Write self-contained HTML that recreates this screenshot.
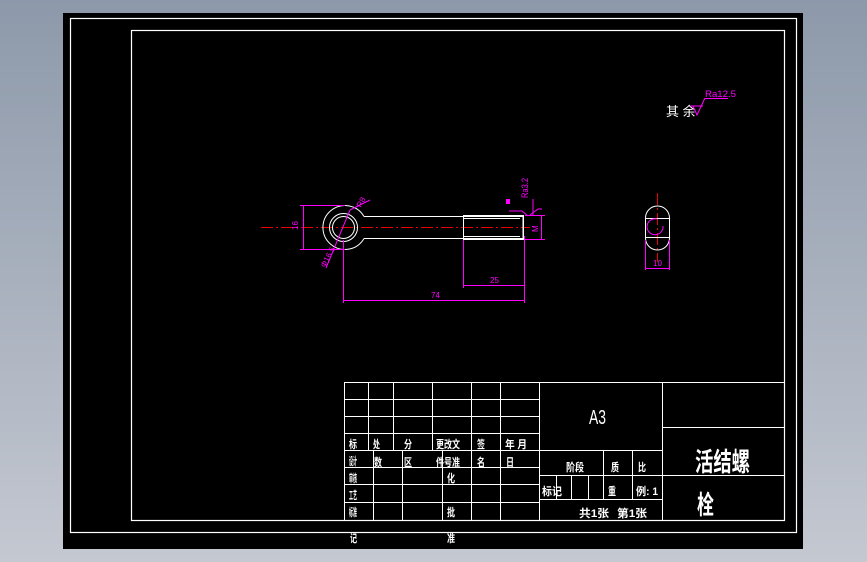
<!DOCTYPE html>
<html><head><meta charset="utf-8"><style>
html,body{margin:0;padding:0;width:867px;height:562px;overflow:hidden;background:linear-gradient(#8d99aa,#c4c8d1);}
svg{display:block}
text{font-family:"Liberation Sans","Noto Sans CJK SC",sans-serif;}
</style></head><body>
<svg width="867" height="562" viewBox="0 0 867 562" xmlns="http://www.w3.org/2000/svg">
<rect x="63" y="13" width="740" height="536" fill="#000"/>
<g fill="none" stroke="#fff" stroke-width="1.2">
<rect x="70.5" y="18.5" width="726" height="514"/>
<rect x="131.5" y="30.5" width="653" height="490"/>
</g>
<g stroke="#fff" stroke-width="1" fill="none">
<rect x="344.5" y="382.5" width="440" height="138"/>
<line x1="344" y1="399.5" x2="539" y2="399.5"/>
<line x1="344" y1="416.5" x2="539" y2="416.5"/>
<line x1="344" y1="433.5" x2="539" y2="433.5"/>
<line x1="344" y1="450.5" x2="662" y2="450.5"/>
<line x1="344" y1="467.5" x2="539" y2="467.5"/>
<line x1="344" y1="484.5" x2="539" y2="484.5"/>
<line x1="344" y1="502.5" x2="539" y2="502.5"/>
<line x1="368.5" y1="382" x2="368.5" y2="450"/>
<line x1="393.5" y1="382" x2="393.5" y2="450"/>
<line x1="432.5" y1="382" x2="432.5" y2="450"/>
<line x1="373.5" y1="450" x2="373.5" y2="520"/>
<line x1="402.5" y1="450" x2="402.5" y2="520"/>
<line x1="442.5" y1="450" x2="442.5" y2="520"/>
<line x1="471.5" y1="382" x2="471.5" y2="520"/>
<line x1="500.5" y1="382" x2="500.5" y2="520"/>
<line x1="539.5" y1="382" x2="539.5" y2="520"/>
<line x1="662.5" y1="382" x2="662.5" y2="520"/>
<line x1="539" y1="475.5" x2="784" y2="475.5"/>
<line x1="539" y1="499.5" x2="662" y2="499.5"/>
<line x1="662" y1="427.5" x2="784" y2="427.5"/>
<line x1="603.5" y1="450" x2="603.5" y2="499"/>
<line x1="632.5" y1="450" x2="632.5" y2="499"/>
<line x1="556.5" y1="475" x2="556.5" y2="499"/>
<line x1="571.5" y1="475" x2="571.5" y2="499"/>
<line x1="588.5" y1="475" x2="588.5" y2="499"/>
</g>
<g fill="#fff" font-size="11" font-weight="bold">
<text x="349" y="448" textLength="8" lengthAdjust="spacingAndGlyphs">标</text>
<text x="349" y="465" textLength="8" lengthAdjust="spacingAndGlyphs">设计</text>
<text x="349" y="482" textLength="8" lengthAdjust="spacingAndGlyphs">审核</text>
<text x="349" y="499" textLength="8" lengthAdjust="spacingAndGlyphs">工艺</text>
<text x="349" y="516" textLength="8" lengthAdjust="spacingAndGlyphs">标准</text>
<text x="350" y="542" textLength="7" lengthAdjust="spacingAndGlyphs">记</text>
<text x="373" y="448" textLength="7" lengthAdjust="spacingAndGlyphs">处</text>
<text x="374" y="466" textLength="8" lengthAdjust="spacingAndGlyphs">数</text>
<text x="404" y="448" textLength="8" lengthAdjust="spacingAndGlyphs">分</text>
<text x="404" y="466" textLength="8" lengthAdjust="spacingAndGlyphs">区</text>
<text x="436" y="448" textLength="24" lengthAdjust="spacingAndGlyphs">更改文</text>
<text x="436" y="466" textLength="24" lengthAdjust="spacingAndGlyphs">件号准</text>
<text x="447" y="482" textLength="8" lengthAdjust="spacingAndGlyphs">化</text>
<text x="447" y="516" textLength="8" lengthAdjust="spacingAndGlyphs">批</text>
<text x="447" y="542" textLength="8" lengthAdjust="spacingAndGlyphs">准</text>
<text x="477" y="448" textLength="8" lengthAdjust="spacingAndGlyphs">签</text>
<text x="477" y="466" textLength="8" lengthAdjust="spacingAndGlyphs">名</text>
<text x="505" y="448" textLength="22" lengthAdjust="spacingAndGlyphs">年 月</text>
<text x="506" y="466" textLength="8" lengthAdjust="spacingAndGlyphs">日</text>
<text x="566" y="471" textLength="18" lengthAdjust="spacingAndGlyphs">阶段</text>
<text x="611" y="471" textLength="8" lengthAdjust="spacingAndGlyphs">质</text>
<text x="638" y="471" textLength="8" lengthAdjust="spacingAndGlyphs">比</text>
<text x="542" y="495" textLength="20" lengthAdjust="spacingAndGlyphs">标记</text>
<text x="608" y="495" textLength="8" lengthAdjust="spacingAndGlyphs">重</text>
<text x="636" y="495" textLength="22" lengthAdjust="spacingAndGlyphs">例: 1</text>
<text x="579" y="517" textLength="30" lengthAdjust="spacingAndGlyphs">共1张</text>
<text x="617" y="517" textLength="30" lengthAdjust="spacingAndGlyphs">第1张</text>
<text x="589" y="424" font-size="20" font-weight="normal" textLength="17" lengthAdjust="spacingAndGlyphs">A3</text>
<text x="695" y="471" font-size="26" textLength="55" lengthAdjust="spacingAndGlyphs">活结螺</text>
<text x="697" y="514" font-size="26" textLength="17" lengthAdjust="spacingAndGlyphs">栓</text>
<text x="666" y="116" font-size="13" font-weight="normal">其 余</text>
</g>
<g stroke="#f0f" stroke-width="1" fill="none">
<line x1="705" y1="98.5" x2="728" y2="98.5"/>
<path d="M705 98 L697 115 L693 106 M690 106 L703 106"/>
<path d="M533 199 L533 216 M509 211 L522 211 L528 216"/>
<path d="M530 215 L538 209 L542 209"/>
</g>
<text x="705" y="97" fill="#f0f" font-size="9" textLength="31" lengthAdjust="spacingAndGlyphs">Ra12.5</text>
<text x="528" y="198" fill="#f0f" font-size="9" transform="rotate(-90 528 198)" textLength="20" lengthAdjust="spacingAndGlyphs">Ra3.2</text>
<g stroke="#e00" stroke-width="1" stroke-dasharray="12,3,2,3">
<line x1="261" y1="227.5" x2="530" y2="227.5"/>
<line x1="657.5" y1="193" x2="657.5" y2="262"/>
</g>
<g stroke="#fff" stroke-width="1" fill="none">
<path d="M364 216.5 A22 22 0 1 0 364 238.5"/>
<path d="M364 216.5 L523 216.5 L523 238.5 L364 238.5"/>
<circle cx="343.5" cy="227.5" r="14"/>
<circle cx="343.5" cy="227.5" r="11"/>
<rect x="463.5" y="215.5" width="60" height="24"/>
<line x1="463" y1="218.5" x2="520" y2="218.5"/>
<line x1="463" y1="236.5" x2="520" y2="236.5"/>
<path d="M645.5 218 A12 12 0 0 1 669.5 218 L669.5 238 A12 12 0 0 1 645.5 238 Z"/>
<line x1="645" y1="218.5" x2="670" y2="218.5"/>
<line x1="645" y1="237.5" x2="670" y2="237.5"/>
</g>
<g stroke="#f0f" stroke-width="1" fill="none">
<line x1="303.5" y1="205" x2="303.5" y2="249"/>
<line x1="300" y1="205.5" x2="345" y2="205.5"/>
<line x1="300" y1="249.5" x2="345" y2="249.5"/>
<line x1="343.5" y1="240" x2="343.5" y2="303"/>
<line x1="524.5" y1="236" x2="524.5" y2="303"/>
<line x1="463.5" y1="240" x2="463.5" y2="288"/>
<line x1="343" y1="300.5" x2="525" y2="300.5"/>
<line x1="463" y1="285.5" x2="525" y2="285.5"/>
<line x1="541.5" y1="215" x2="541.5" y2="240"/>
<line x1="525" y1="215.5" x2="545" y2="215.5"/>
<line x1="525" y1="239.5" x2="545" y2="239.5"/>
<line x1="326" y1="268" x2="350" y2="210"/>
<line x1="350" y1="210" x2="370" y2="200"/>
<line x1="645.5" y1="240" x2="645.5" y2="270"/>
<line x1="669.5" y1="240" x2="669.5" y2="270"/>
<line x1="645" y1="268.5" x2="670" y2="268.5"/>
<path d="M663 226 A8 8 0 1 1 657 219" />
</g>
<g fill="#f0f" font-size="8">
<text x="298" y="230" transform="rotate(-90 298 230)">16</text>
<text x="431" y="298">74</text>
<text x="490" y="283">25</text>
<text x="538" y="232" transform="rotate(-90 538 232)">M</text>
<text x="653" y="266">10</text>
<text x="325" y="268" transform="rotate(-62 325 268)">Φ16.5</text>
<text x="361" y="208" transform="rotate(-62 361 208)">R8</text>
<rect x="506" y="199" width="4" height="5"/>
</g>
</svg>
</body></html>
